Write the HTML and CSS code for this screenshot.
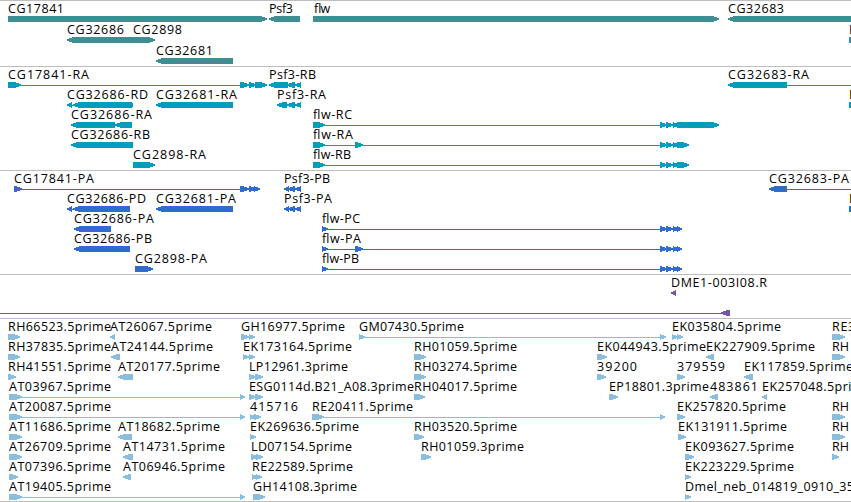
FILE: index.html
```html
<!DOCTYPE html>
<html>
<head>
<meta charset="UTF-8">
<title>Genome browser</title>
<link rel="stylesheet" href="styles.css">
</head>
<body>
	<div class="browser">
		<svg class="track genes" id="genes"></svg>
		<svg class="track transcripts" id="transcripts"></svg>
		<svg class="track proteins" id="proteins"></svg>
		<svg class="track bacends" id="bacends"></svg>
		<svg class="track ests" id="ests"></svg>
	</div>
	<script src="script.js"></script>
</body>
</html>
```
FILE: styles.css
```css
body {
	margin: 0;
	background-color: #fff;
	overflow: hidden;
}

.browser {
	display: flex;
	flex-direction: column;
	width: 851px;
	height: 502px;
	box-sizing: border-box;
	border-bottom: 1px solid #bebebe;
}

.track {
	display: block;
	width: 851px;
	flex: none;
	box-sizing: border-box;
	border-top: 1px solid #bebebe;
}

.track text {
	font-family: "Open Sans", "Noto Sans", sans-serif;
	font-size: 12.5px;
	fill: #000;
}

.track polygon,
.track rect {
	shape-rendering: crispEdges;
}

.genes {
	height: 66px;
	fill: #3e8e94;
}

.transcripts {
	height: 104px;
	fill: #009dbf;
}

.proteins {
	height: 104px;
	fill: #316bce;
}

.bacends {
	height: 44px;
	fill: #7557a8;
}

.ests {
	height: 183px;
	fill: #8bbddd;
}
```
FILE: script.js
```js
var NS = "http://www.w3.org/2000/svg";

// [row, label, label start, label end, strand, exons]
var genes = [
	[0, "CG17841", 8, 64, 1, [[8, 267]]],
	[0, "Psf3", 269, 293, -1, [[269, 300]]],
	[0, "flw", 313, 329, 1, [[313, 719]]],
	[0, "CG32683", 728, 784, -1, [[728, 860]]],
	[1, "CG32686", 67, 124, -1, [[67, 134]]],
	[1, "CG2898", 133, 182, 1, [[133, 155]]],
	[1, "R", 849, 857, 1, [[849, 870]]],
	[2, "CG32681", 156, 213, -1, [[156, 233]]]
];

var transcripts = [
	[0, "CG17841-RA", 8, 89, 1, [[8, 21], [240, 249], [249, 256], [255, 267]]],
	[0, "Psf3-RB", 269, 316, -1, [[269, 288], [287, 295], [295, 301]]],
	[0, "CG32683-RA", 728, 809, -1, [[728, 787], [870, 880]]],
	[1, "CG32686-RD", 67, 148, -1, [[67, 72], [73, 132], [132, 133]]],
	[1, "CG32681-RA", 156, 237, -1, [[156, 233]]],
	[1, "Psf3-RA", 277, 326, -1, [[277, 287], [287, 295], [295, 301]]],
	[1, "R", 849, 857, 1, [[849, 870]]],
	[2, "CG32686-RA", 71, 152, -1, [[71, 115], [115, 132]]],
	[2, "flw-RC", 313, 352, 1, [[313, 325], [660, 667], [666, 673], [673, 679], [677, 719]]],
	[3, "CG32686-RB", 71, 150, -1, [[71, 133]]],
	[3, "flw-RA", 313, 353, 1, [[313, 325], [355, 363], [660, 667], [666, 673], [673, 679], [677, 689]]],
	[4, "CG2898-RA", 133, 206, 1, [[133, 155]]],
	[4, "flw-RB", 313, 351, 1, [[313, 325], [660, 667], [666, 673], [673, 679], [677, 689]]]
];

var proteins = [
	[0, "CG17841-PA", 14, 94, 1, [[14, 22], [240, 249], [249, 256], [254, 260]]],
	[0, "Psf3-PB", 284, 330, -1, [[284, 289], [288, 295], [295, 301]]],
	[0, "CG32683-PA", 769, 849, -1, [[769, 787], [870, 880]]],
	[1, "CG32686-PD", 67, 146, -1, [[67, 72], [73, 130]]],
	[1, "CG32681-PA", 156, 236, -1, [[156, 233]]],
	[1, "Psf3-PA", 284, 332, -1, [[284, 289], [288, 295], [295, 301]]],
	[1, "R", 849, 857, 1, [[849, 870]]],
	[2, "CG32686-PA", 74, 154, -1, [[74, 111]]],
	[2, "flw-PC", 322, 360, 1, [[322, 328], [660, 667], [666, 673], [673, 679], [677, 682]]],
	[3, "CG32686-PB", 74, 152, -1, [[74, 130]]],
	[3, "flw-PA", 322, 361, 1, [[322, 328], [355, 363], [660, 667], [666, 673], [673, 679], [677, 682]]],
	[4, "CG2898-PA", 135, 207, 1, [[135, 153]]],
	[4, "flw-PB", 322, 359, 1, [[322, 328], [660, 667], [666, 673], [673, 679], [677, 682]]]
];

var bacends = [
	[0, "DME1-003I08.R", 671, 767, -1, [[671, 676]]],
	[1, "", 0, 0, -1, [[-20, -10], [721, 730]]]
];

var ests = [
	[0, "RH66523.5prime", 8, 111, 1, [[8, 20]]],
	[0, "AT26067.5prime", 110, 212, -1, [[110, 115]]],
	[0, "GH16977.5prime", 241, 345, 1, [[241, 249], [249, 255]]],
	[0, "GM07430.5prime", 359, 464, 1, [[359, 365], [660, 666]]],
	[0, "EK035804.5prime", 672, 781, 1, [[672, 678], [677, 683]]],
	[0, "RE35", 832, 863, 1, [[832, 845]]],
	[1, "RH37835.5prime", 8, 111, 1, [[8, 20]]],
	[1, "AT24144.5prime", 111, 213, -1, [[111, 120]]],
	[1, "EK173164.5prime", 243, 352, 1, [[243, 249], [249, 255]]],
	[1, "RH01059.5prime", 414, 517, 1, [[414, 426]]],
	[1, "EK044943.5prime", 597, 706, 1, [[597, 607]]],
	[1, "EK227909.5prime", 706, 815, -1, [[706, 714]]],
	[1, "RH", 832, 849, 1, [[832, 845]]],
	[2, "RH41551.5prime", 8, 111, 1, [[8, 16]]],
	[2, "AT20177.5prime", 118, 220, -1, [[118, 133]]],
	[2, "LP12961.3prime", 249, 348, 1, [[249, 256], [255, 263]]],
	[2, "RH03274.5prime", 414, 517, 1, [[414, 426]]],
	[2, "39200", 597, 637, 1, [[597, 606]]],
	[2, "379559", 677, 725, 1, [[677, 685]]],
	[2, "EK117859.5prime", 744, 853, -1, [[744, 753]]],
	[3, "AT03967.5prime", 9, 111, 1, [[9, 22], [240, 245]]],
	[3, "ESG0114d.B21_A08.3prime", 249, 414, 1, [[249, 256], [255, 263]]],
	[3, "RH04017.5prime", 414, 517, 1, [[414, 425]]],
	[3, "EP18801.3prime", 609, 709, 1, [[609, 618]]],
	[3, "483861", 710, 758, -1, [[710, 718]]],
	[3, "EK257048.5prime", 762, 871, -1, [[762, 767]]],
	[4, "AT20087.5prime", 9, 111, 1, [[9, 22], [240, 245]]],
	[4, "415716", 250, 298, 1, [[250, 256], [254, 261]]],
	[4, "RE20411.5prime", 312, 413, 1, [[312, 324], [660, 665]]],
	[4, "EK257820.5prime", 677, 786, 1, [[677, 685]]],
	[4, "RH", 832, 849, 1, [[832, 845]]],
	[5, "AT11686.5prime", 9, 111, 1, [[9, 22]]],
	[5, "AT18682.5prime", 118, 220, -1, [[118, 132]]],
	[5, "EK269636.5prime", 250, 359, 1, [[250, 256]]],
	[5, "RH03520.5prime", 414, 517, 1, [[414, 424]]],
	[5, "EK131911.5prime", 678, 787, 1, [[678, 686]]],
	[5, "RH", 832, 849, 1, [[832, 845]]],
	[6, "AT26709.5prime", 9, 111, 1, [[9, 22]]],
	[6, "AT14731.5prime", 123, 225, -1, [[123, 133]]],
	[6, "LD07154.5prime", 251, 352, 1, [[251, 258], [256, 263]]],
	[6, "RH01059.3prime", 421, 524, 1, [[421, 431]]],
	[6, "EK093627.5prime", 685, 794, 1, [[685, 694]]],
	[6, "RH", 832, 849, 1, [[832, 839]]],
	[7, "AT07396.5prime", 9, 111, 1, [[9, 18]]],
	[7, "AT06946.5prime", 123, 225, -1, [[123, 131]]],
	[7, "RE22589.5prime", 252, 353, 1, [[252, 258], [256, 262]]],
	[7, "EK223229.5prime", 685, 794, 1, [[685, 691]]],
	[8, "AT19405.5prime", 9, 111, 1, [[9, 22], [240, 245]]],
	[8, "GH14108.3prime", 253, 357, 1, [[253, 265]]],
	[8, "Dmel_neb_014819_0910_35", 685, 854, 1, [[685, 691]]]
];

function add(svg, tag, attrs){
	var el = document.createElementNS(NS, tag);
	for(var key in attrs){
		el.setAttribute(key, attrs[key]);
	}
	svg.appendChild(el);
	return el;
}

// box with a pointed end in the strand direction
function drawExon(svg, a, b, y, strand){
	var head = Math.min(6, b - a);
	var tip = strand > 0 ? b : a;
	var tail = strand > 0 ? a : b;
	var neck = tip - strand * head;
	add(svg, "polygon", {
		points: [tail, y, neck, y, tip, y + 2.4, tip, y + 3.6, neck, y + 6, tail, y + 6].join(" ")
	});
}

function drawTrack(id, features, pitch){
	var svg = document.getElementById(id);
	features.forEach(function(f){
		// the border takes the first pixel of the track
		var top = f[0] * pitch - 1;
		var exons = f[5];
		if(exons.length > 1){
			var start = exons[0][0];
			add(svg, "rect", {
				x: start,
				y: top + 19,
				width: exons[exons.length - 1][1] - start,
				height: 1
			});
		}
		exons.forEach(function(e){
			drawExon(svg, e[0], e[1], top + 16, f[4]);
		});
		if(f[1] != ""){
			var text = add(svg, "text", {
				x: f[2],
				y: top + 13,
				textLength: f[3] - f[2]
			});
			text.textContent = f[1];
		}
	});
}

drawTrack("genes", genes, 21);
drawTrack("transcripts", transcripts, 20);
drawTrack("proteins", proteins, 20);
drawTrack("bacends", bacends, 20);
drawTrack("ests", ests, 20);
```
